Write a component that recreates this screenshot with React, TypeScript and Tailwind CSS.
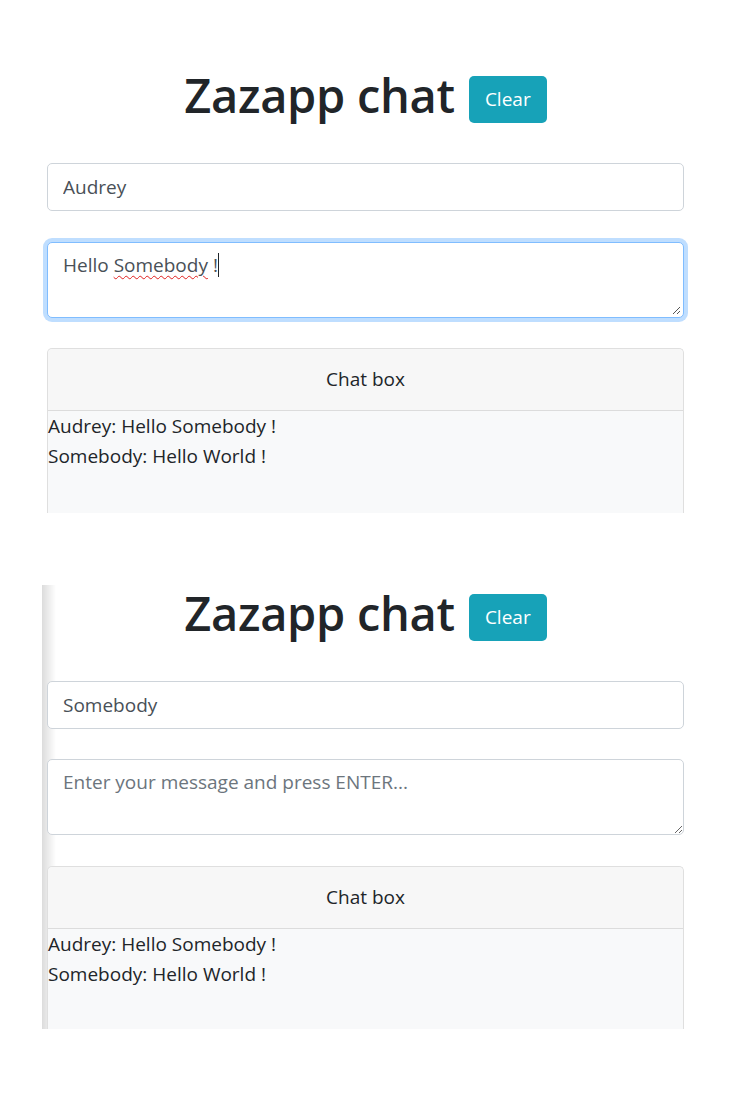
import React from 'react'

type ChatLine = { author: string; text: string }

const messages: ChatLine[] = [
  { author: 'Audrey', text: 'Hello Somebody !' },
  { author: 'Somebody', text: 'Hello World !' },
]

// la capture coupe la boîte de chat en bas, d'où pas de bordure basse
function ChatWindow({ name, typing }: { name: string; typing?: boolean }) {
  return (
    <div className="w-[637px]">
      {/* titre + bouton */}
      <div className="flex items-center justify-center gap-[14px] h-[64px]">
        <h1 className="pb-[8px] text-[47px] leading-[56px] tracking-[-0.3px] text-[#212529] font-semibold">Zazapp chat</h1>
        <button className="h-[47px] w-[78px] rounded-[5px] bg-[#17a2b8] text-white text-[19px]">Clear</button>
      </div>

      <input
        readOnly
        value={name}
        className="mt-[32px] block w-full h-[48px] rounded-[5px] border border-[#ced4da] bg-white px-[15px] text-[19px] text-[#495057] outline-none"
      />

      {typing ? (
        <div className="relative mt-[31px] h-[76px] rounded-[5px] border border-[#80bdff] bg-white px-[15px] py-[7px] text-[19px] leading-[30px] text-[#495057] shadow-[0_0_0_4px_rgba(0,123,255,0.25)]">
          Hello <span className="underline decoration-wavy decoration-[#e0201e] decoration-1 underline-offset-[3px]">Somebody</span> !
          <span className="inline-block w-px h-[24px] bg-[#212529] align-[-5px]" />
          <svg className="absolute right-[2px] bottom-[2px]" width="10" height="10" viewBox="0 0 10 10">
            <path d="M9 2 L2 9 M9 6 L6 9" stroke="#555" strokeWidth="1" />
          </svg>
        </div>
      ) : (
        <textarea
          readOnly
          rows={2}
          placeholder="Enter your message and press ENTER..."
          className="mt-[30px] block w-full h-[76px] rounded-[5px] border border-[#ced4da] bg-white px-[15px] py-[7px] text-[19px] leading-[30px] text-[#495057] placeholder:text-[#6c757d] outline-none"
        />
      )}

      {/* chat box */}
      <div className={`${typing ? 'mt-[30px]' : 'mt-[31px]'} rounded-t-[5px] border border-b-0 border-[#dfdfdf] bg-[#f8f9fa]`}>
        <div className="h-[62px] flex items-center justify-center bg-[#f7f7f7] border-b border-[#dcdcdc] rounded-t-[5px] text-[19px] text-[#212529]">
          Chat box
        </div>
        <div className={`${typing ? 'h-[102px]' : 'h-[100px]'} text-[19px] leading-[30px] text-[#212529]`}>
          {messages.map((m) => (
            <div key={m.author}>
              {m.author}: {m.text}
            </div>
          ))}
        </div>
      </div>
    </div>
  )
}

export default function App() {
  return (
    <div className="w-[736px] h-[1101px] bg-white font-['Open_Sans',sans-serif]">
      <div className="pt-[67px] pl-[47px]">
        <ChatWindow name="Audrey" typing />
      </div>
      <div className="mt-[72px] ml-[42px] w-[694px] pl-[5px] bg-[linear-gradient(to_right,#dcdcdc,#ffffff_14px)]">
        <ChatWindow name="Somebody" />
      </div>
    </div>
  )
}
